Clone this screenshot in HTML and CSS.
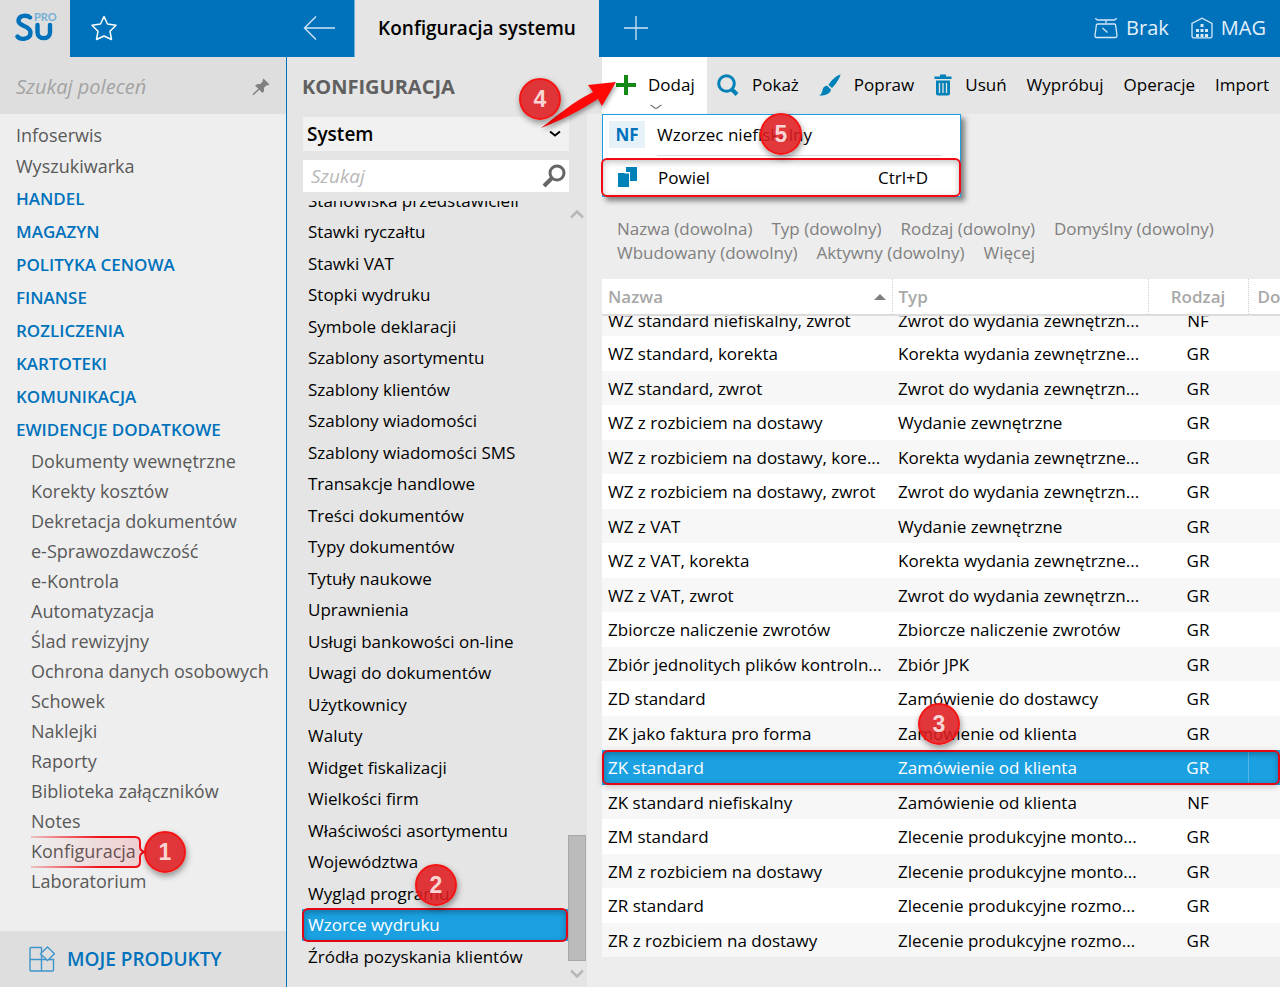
FILE: index.html
```html
<!DOCTYPE html>
<html lang="pl">
<head>
    <meta charset="UTF-8">
    <meta name="viewport" content="width=device-width, initial-scale=1.0">
    <title>Konfiguracja systemu</title>
    <link rel="stylesheet" href="styles.css">
</head>
<body>

    <header class="topbar">
        <a href="#" class="logo" aria-label="Su PRO">
            <svg width="44" height="30" viewBox="0 0 44 30" fill="none" stroke="#0072bc" stroke-width="4.4" stroke-linecap="round">
                <path d="M15 5.5C12.500 3 4 2.500 3.500 8.500C3 15 15.500 13 15.500 20.500C15.500 28 5 28 2.500 24.500"/>
                <path d="M22.500 13V20.500C22.500 28 35 28 35 20.500V13"/>
            </svg>
            <span class="logo-pro">PRO</span>
        </a>
        <div class="topbar-left">
            <button type="button" class="icon-button" aria-label="Ulubione">
                <svg width="28" height="28" viewBox="0 0 28 28" fill="none" stroke="#fff" stroke-width="1.5" stroke-linejoin="round">
                    <path d="M14 2.500L17.500 10L26 11.300L20 17.200L21.500 25.500L14 22L6.500 25.500L8 17.200L2 11.300L10.500 10Z"/>
                </svg>
            </button>
            <button type="button" class="icon-button" aria-label="Wstecz">
                <svg width="34" height="26" viewBox="0 0 34 26" fill="none" stroke="#cfe5f5" stroke-width="1.4">
                    <path d="M33 13H3M14 1.500L2.500 13L14 24.500"/>
                </svg>
            </button>
        </div>
        <div class="tab">Konfiguracja systemu</div>
        <div class="topbar-right">
            <button type="button" class="icon-button" aria-label="Nowa karta">
                <svg width="26" height="26" viewBox="0 0 26 26" fill="none" stroke="#cfe5f5" stroke-width="1.3">
                    <path d="M13 1V25M1 13H25"/>
                </svg>
            </button>
            <div class="status">
                <a href="#" class="status-item">
                    <svg width="24" height="22" viewBox="0 0 24 22" fill="none" stroke="#d5e8f6" stroke-width="1.3">
                        <path d="M1.500 1C2 3 3 3 4 3H20C21 3 22 3 22.500 1M12 3V6M3.500 7H20.500C21 7 21.500 7.500 21.600 8L23 18.500C23 20 22.500 20.500 21.500 20.500H2.500C1.500 20.500 1 20 1 18.500L2.400 8C2.500 7.500 3 7 3.500 7ZM8.500 11L13.500 15.500"/>
                    </svg>
                    Brak
                </a>
                <a href="#" class="status-item">
                    <svg width="22" height="22" viewBox="0 0 22 22" fill="none" stroke="#d5e8f6" stroke-width="1.3">
                        <path d="M1 18.500V6.500L11 1.200L21 6.500V18.500C21 20 20.500 20.800 19.500 20.800H2.500C1.500 20.800 1 20 1 18.500Z"/>
                        <path fill="#d5e8f6" stroke="none" d="M9.500 7h3v3h-3zM5 12h3v3H5zM9.500 12h3v3h-3zM14 12h3v3h-3zM5 17h3v3H5zM9.500 17h3v3h-3zM14 17h3v3h-3z"/>
                    </svg>
                    MAG
                </a>
            </div>
        </div>
    </header>

    <div class="layout">
        <aside class="sidebar">
            <div class="command-search">
                <input type="text" aria-label="Szukaj poleceń" placeholder="Szukaj poleceń">
                <svg width="18" height="18" viewBox="0 0 18 18" fill="#808080">
                    <path d="M11.500 0.500L17.500 6.500L15.500 7.500L14.500 7.200L11.800 10C12.500 12 12 13.500 10.500 15L7.300 11.800L2 16.800L0.500 17.300L1 15.800L6.300 10.700L3 7.500C4.500 6 6.500 5.500 8 6.200L10.800 3.500L10.500 2.500Z"/>
                </svg>
            </div>
            <nav class="menu">
                <a href="#" class="menu-link">Infoserwis</a>
                <a href="#" class="menu-link">Wyszukiwarka</a>
                <a href="#" class="menu-group">HANDEL</a>
                <a href="#" class="menu-group">MAGAZYN</a>
                <a href="#" class="menu-group">POLITYKA CENOWA</a>
                <a href="#" class="menu-group">FINANSE</a>
                <a href="#" class="menu-group">ROZLICZENIA</a>
                <a href="#" class="menu-group">KARTOTEKI</a>
                <a href="#" class="menu-group">KOMUNIKACJA</a>
                <a href="#" class="menu-group">EWIDENCJE DODATKOWE</a>
                <a href="#" class="menu-sub">Dokumenty wewnętrzne</a>
                <a href="#" class="menu-sub">Korekty kosztów</a>
                <a href="#" class="menu-sub">Dekretacja dokumentów</a>
                <a href="#" class="menu-sub">e-Sprawozdawczość</a>
                <a href="#" class="menu-sub">e-Kontrola</a>
                <a href="#" class="menu-sub">Automatyzacja</a>
                <a href="#" class="menu-sub">Ślad rewizyjny</a>
                <a href="#" class="menu-sub">Ochrona danych osobowych</a>
                <a href="#" class="menu-sub">Schowek</a>
                <a href="#" class="menu-sub">Naklejki</a>
                <a href="#" class="menu-sub">Raporty</a>
                <a href="#" class="menu-sub">Biblioteka załączników</a>
                <a href="#" class="menu-sub">Notes</a>
                <a href="#" class="menu-sub menu-marked">
                    Konfiguracja
                    <svg class="marker" width="116" height="34" viewBox="0 0 116 34" fill="none">
                        <defs>
                            <linearGradient id="markerLine" gradientUnits="userSpaceOnUse" x1="0" y1="0" x2="116" y2="0">
                                <stop offset="0" stop-color="#f01018" stop-opacity="0.2"/>
                                <stop offset="0.6" stop-color="#f01018"/>
                            </linearGradient>
                            <linearGradient id="markerFill" x1="0" y1="0" x2="1" y2="0">
                                <stop offset="0" stop-color="#f01018" stop-opacity="0"/>
                                <stop offset="1" stop-color="#f01018" stop-opacity="0.14"/>
                            </linearGradient>
                        </defs>
                        <path fill="url(#markerFill)" d="M0 2H104Q109 2 109 7V27Q109 32 104 32H0Z"/>
                        <path stroke="url(#markerLine)" stroke-width="2" d="M0 2H104Q109 2 109 7V12Q109 16 114 17Q109 18 109 22V27Q109 32 104 32H0"/>
                    </svg>
                    <span class="badge badge-1">1</span>
                </a>
                <a href="#" class="menu-sub">Laboratorium</a>
            </nav>
            <a href="#" class="products">
                <svg width="26" height="26" viewBox="0 0 26 26" fill="none" stroke="#3f95cb" stroke-width="1.4">
                    <path d="M12.500 13.500H1V2.500Q1 1.500 2 1.500H12.500V25H2Q1 25 1 24V13.500M12.500 13.500H24.500V24Q24.500 25 23.500 25H12.500"/>
                    <path fill="#dedede" d="M18.500 1L25.500 7.800L18.500 14.600L11.500 7.800Z"/>
                </svg>
                MOJE PRODUKTY
            </a>
        </aside>

        <section class="config">
            <h1>KONFIGURACJA</h1>
            <div class="select-wrap">
                <select aria-label="Obszar konfiguracji">
                    <option>System</option>
                </select>
                <svg width="12" height="8" viewBox="0 0 12 8" fill="none" stroke="#000" stroke-width="2">
                    <path d="M1 1.500L6 5.500L11 1.500"/>
                </svg>
            </div>
            <div class="search-wrap">
                <input type="text" aria-label="Szukaj" placeholder="Szukaj">
                <svg width="24" height="24" viewBox="0 0 24 24" fill="none" stroke="#666">
                    <circle cx="15" cy="9" r="7" stroke-width="3"/>
                    <path d="M10 14L2 22" stroke-width="4"/>
                </svg>
            </div>
            <div class="config-body">
                <ul class="config-list">
                    <li>Stanowiska przedstawicieli</li>
                    <li>Stawki ryczałtu</li>
                    <li>Stawki VAT</li>
                    <li>Stopki wydruku</li>
                    <li>Symbole deklaracji</li>
                    <li>Szablony asortymentu</li>
                    <li>Szablony klientów</li>
                    <li>Szablony wiadomości</li>
                    <li>Szablony wiadomości SMS</li>
                    <li>Transakcje handlowe</li>
                    <li>Treści dokumentów</li>
                    <li>Typy dokumentów</li>
                    <li>Tytuły naukowe</li>
                    <li>Uprawnienia</li>
                    <li>Usługi bankowości on-line</li>
                    <li>Uwagi do dokumentów</li>
                    <li>Użytkownicy</li>
                    <li>Waluty</li>
                    <li>Widget fiskalizacji</li>
                    <li>Wielkości firm</li>
                    <li>Właściwości asortymentu</li>
                    <li>Województwa</li>
                    <li>Wygląd programu</li>
                    <li class="selected">Wzorce wydruku<span class="badge badge-2">2</span></li>
                    <li>Źródła pozyskania klientów</li>
                </ul>
                <div class="scrollbar">
                    <svg width="14" height="10" viewBox="0 0 14 10" fill="none" stroke="#b8b8b8" stroke-width="2.500">
                        <path d="M1 8.500L7 2.500L13 8.500"/>
                    </svg>
                    <div class="scroll-thumb"></div>
                    <svg width="14" height="10" viewBox="0 0 14 10" fill="none" stroke="#b8b8b8" stroke-width="2.500">
                        <path d="M1 1.500L7 7.500L13 1.500"/>
                    </svg>
                </div>
            </div>
        </section>

        <main class="content">
            <div class="toolbar">
                <div class="add-wrap">
                    <button type="button" class="tool tool-add">
                        <svg width="22" height="20" viewBox="0 0 22 20" fill="#138a13"><path d="M9 0h4v8h8v4h-8v8H9v-8H1V8h8z"/></svg>
                        Dodaj
                        <svg class="add-chevron" width="12" height="6" viewBox="0 0 12 6" fill="none" stroke="#777" stroke-width="1.2"><path d="M0.500 1C3 2 4.500 4.500 6 4.500S9 2 11.500 1"/></svg>
                    </button>
                    <div class="add-menu">
                        <button type="button" class="add-item">
                            <span class="nf">NF</span>
                            Wzorzec niefiskalny
                        </button>
                        <button type="button" class="add-item add-item-marked">
                            <svg width="20" height="20" viewBox="0 0 20 20" fill="#0081b8"><path d="M8 0H19V14H12V5H8Z"/><path d="M0 6H6.500V6.500H11V20H0Z"/></svg>
                            Powiel
                            <kbd>Ctrl+D</kbd>
                        </button>
                    </div>
                    <span class="badge badge-5">5</span>
                    <svg class="arrow" width="80" height="58" viewBox="0 0 80 58" fill="#fe0808">
                        <path d="M3 53C20 40 35 27 55 17L50 10L78 7L64 31L60 24C43 35 22 46 3 53Z"/>
                    </svg>
                    <span class="badge badge-4">4</span>
                </div>
                <button type="button" class="tool">
                    <svg width="22" height="22" viewBox="0 0 22 22" fill="none" stroke="#0081b8"><circle cx="9.500" cy="9.500" r="7.800" stroke-width="3"/><path d="M14.500 15L20 20.500" stroke-width="4"/></svg>
                    Pokaż
                </button>
                <button type="button" class="tool">
                    <svg width="22" height="22" viewBox="0 0 22 22" fill="#0081b8"><path d="M21.500 0.500C18 1 12 6.500 9.500 11L13 14C17 10 21 4 21.500 0.500ZM8.500 12L12 15.500C11.500 20 5 22 0 21.500C3 20 3 17.500 4 14.500C5 12.500 7 11.500 8.500 12Z"/></svg>
                    Popraw
                </button>
                <button type="button" class="tool">
                    <svg width="18" height="22" viewBox="0 0 18 22"><path fill="#0081b8" d="M6 0.500H12V2.500H17.500V5H0.500V2.500H6ZM2 6.500H16V19.500Q16 21.500 14 21.500H4Q2 21.500 2 19.500Z"/><path stroke="#e5e5e5" stroke-width="1.3" d="M5.500 9V19M9 9V19M12.500 9V19"/></svg>
                    Usuń
                </button>
                <button type="button" class="tool">Wypróbuj</button>
                <button type="button" class="tool">Operacje</button>
                <button type="button" class="tool">Import</button>
            </div>

            <div class="filters">
                <a href="#">Nazwa (dowolna)</a>
                <a href="#">Typ (dowolny)</a>
                <a href="#">Rodzaj (dowolny)</a>
                <a href="#">Domyślny (dowolny)</a>
                <a href="#">Wbudowany (dowolny)</a>
                <a href="#">Aktywny (dowolny)</a>
                <a href="#">Więcej</a>
            </div>

            <table class="grid">
                <colgroup>
                    <col class="col-name">
                    <col class="col-type">
                    <col class="col-kind">
                    <col class="col-default">
                </colgroup>
                <thead>
                    <tr>
                        <th>Nazwa<span class="sort"></span></th>
                        <th>Typ</th>
                        <th>Rodzaj</th>
                        <th>Do</th>
                    </tr>
                </thead>
                <tbody>
                    <tr class="cut"><td><div>WZ standard niefiskalny, zwrot</div></td><td><div>Zwrot do wydania zewnętrzn...</div></td><td><div>NF</div></td><td></td></tr>
                    <tr><td>WZ standard, korekta</td><td>Korekta wydania zewnętrzne...</td><td>GR</td><td></td></tr>
                    <tr><td>WZ standard, zwrot</td><td>Zwrot do wydania zewnętrzn...</td><td>GR</td><td></td></tr>
                    <tr><td>WZ z rozbiciem na dostawy</td><td>Wydanie zewnętrzne</td><td>GR</td><td></td></tr>
                    <tr><td>WZ z rozbiciem na dostawy, kore...</td><td>Korekta wydania zewnętrzne...</td><td>GR</td><td></td></tr>
                    <tr><td>WZ z rozbiciem na dostawy, zwrot</td><td>Zwrot do wydania zewnętrzn...</td><td>GR</td><td></td></tr>
                    <tr><td>WZ z VAT</td><td>Wydanie zewnętrzne</td><td>GR</td><td></td></tr>
                    <tr><td>WZ z VAT, korekta</td><td>Korekta wydania zewnętrzne...</td><td>GR</td><td></td></tr>
                    <tr><td>WZ z VAT, zwrot</td><td>Zwrot do wydania zewnętrzn...</td><td>GR</td><td></td></tr>
                    <tr><td>Zbiorcze naliczenie zwrotów</td><td>Zbiorcze naliczenie zwrotów</td><td>GR</td><td></td></tr>
                    <tr><td>Zbiór jednolitych plików kontroln...</td><td>Zbiór JPK</td><td>GR</td><td></td></tr>
                    <tr><td>ZD standard</td><td>Zamówienie do dostawcy</td><td>GR</td><td></td></tr>
                    <tr><td>ZK jako faktura pro forma</td><td>Zamówienie od klienta</td><td>GR</td><td></td></tr>
                    <tr class="selected"><td>ZK standard</td><td>Zamówienie od klienta</td><td>GR</td><td><span class="badge badge-3">3</span></td></tr>
                    <tr><td>ZK standard niefiskalny</td><td>Zamówienie od klienta</td><td>NF</td><td></td></tr>
                    <tr><td>ZM standard</td><td>Zlecenie produkcyjne monto...</td><td>GR</td><td></td></tr>
                    <tr><td>ZM z rozbiciem na dostawy</td><td>Zlecenie produkcyjne monto...</td><td>GR</td><td></td></tr>
                    <tr><td>ZR standard</td><td>Zlecenie produkcyjne rozmo...</td><td>GR</td><td></td></tr>
                    <tr><td>ZR z rozbiciem na dostawy</td><td>Zlecenie produkcyjne rozmo...</td><td>GR</td><td></td></tr>
                </tbody>
            </table>
        </main>
    </div>

</body>
</html>
```
FILE: styles.css
```css
* {
    box-sizing: border-box;
}
body {
    margin: 0;
    height: 100vh;
    display: flex;
    flex-direction: column;
    overflow: hidden;
    background-color: #ededed;
    font-family: "Open Sans", "Noto Sans", sans-serif;
    font-size: 17px;
    color: #000;
}
a {
    color: inherit;
    text-decoration: none;
}
button, input, select {
    font: inherit;
    color: inherit;
    border: none;
    border-radius: 0;
    background: none;
    padding: 0;
    margin: 0;
    outline: none;
}
svg {
    flex: none;
}

/* top bar */
.topbar {
    flex: none;
    display: flex;
    height: 57px;
    background-color: #0072bc;
}
.logo {
    width: 70px;
    padding: 12px 0 0 15px;
    background-color: #dedede;
    position: relative;
}
.logo-pro {
    position: absolute;
    top: 10px;
    left: 34px;
    font-family: Lato, sans-serif;
    font-size: 11px;
    font-weight: bold;
    line-height: 14px;
    color: #74afd6;
}
.topbar-left {
    width: 285px;
    display: flex;
    align-items: center;
    justify-content: space-between;
    padding: 0 18px 2px 20px;
    border-right: 1px solid #74afd6;
}
.icon-button {
    display: flex;
    cursor: pointer;
}
.tab {
    width: 244px;
    display: flex;
    align-items: center;
    justify-content: center;
    padding-bottom: 2px;
    background-color: #e5e5e5;
    font-size: 19px;
    font-weight: 600;
    white-space: nowrap;
}
.topbar-right {
    flex: 1;
    display: flex;
    align-items: center;
    justify-content: space-between;
    padding: 0 14px 2px 24px;
}
.status {
    display: flex;
    gap: 22px;
    color: #e4f0f9;
    font-size: 20px;
}
.status-item {
    display: flex;
    align-items: center;
    gap: 8px;
}

.layout {
    flex: 1;
    min-height: 0;
    display: flex;
}

/* left menu */
.sidebar {
    width: 287px;
    flex: none;
    display: flex;
    flex-direction: column;
    border-right: 1px solid #0072bc;
    background-color: #eee;
    color: #595959;
    font-size: 18px;
}
.command-search {
    display: flex;
    align-items: center;
    height: 57px;
    padding: 2px 16px 0;
    background-color: #dedede;
}
.command-search input {
    flex: 1;
    min-width: 0;
    font-size: 20px;
    font-style: italic;
}
.command-search input::placeholder {
    color: #a3a3a3;
}
.menu {
    flex: 1;
    display: flex;
    flex-direction: column;
    padding-top: 6px;
}
.menu a {
    padding-left: 16px;
    line-height: 31px;
    white-space: nowrap;
}
.menu .menu-group {
    line-height: 33px;
    font-size: 17px;
    font-weight: 600;
    color: #0072bc;
}
.menu .menu-sub {
    padding-left: 31px;
    line-height: 30px;
}
.menu-marked {
    position: relative;
}
.marker {
    position: absolute;
    left: 31px;
    top: -1px;
}
.products {
    display: flex;
    align-items: center;
    gap: 12px;
    height: 56px;
    padding-left: 29px;
    background-color: #dedede;
    font-size: 19px;
    font-weight: 600;
    color: #0072bc;
}

/* configuration list */
.config {
    width: 300px;
    flex: none;
    display: flex;
    flex-direction: column;
    background-color: #e5e5e5;
    padding-left: 15px;
}
.config h1 {
    margin: 0;
    font-size: 20px;
    line-height: 60px;
    font-weight: bold;
    color: #606060;
}
.select-wrap, .search-wrap {
    display: flex;
    align-items: center;
    margin: 0 18px 0 1px;
}
.select-wrap {
    height: 34px;
    padding-right: 8px;
    background-color: #f1f1f1;
}
.select-wrap select {
    flex: 1;
    appearance: none;
    padding-left: 4px;
    font-size: 19px;
    font-weight: 600;
}
.search-wrap {
    height: 32px;
    margin-top: 9px;
    padding: 0 3px 0 8px;
    background-color: #fff;
}
.search-wrap input {
    flex: 1;
    min-width: 0;
    font-size: 19px;
    font-style: italic;
}
.search-wrap input::placeholder {
    color: #b8b8b8;
}
.config-body {
    flex: 1;
    min-height: 0;
    display: flex;
    margin-top: 9px;
    padding-right: 1px;
    padding-bottom: 8px;
}
/* scrolled to the end, the first row is cut */
.config-list {
    flex: 1;
    display: flex;
    flex-direction: column;
    justify-content: flex-end;
    margin: 0;
    padding: 0 0 7px;
    overflow: hidden;
    list-style: none;
}
.config-list li {
    flex: none;
    height: 31px;
    padding-left: 6px;
    line-height: 31px;
    white-space: nowrap;
    position: relative;
}
.config-list li:nth-child(even) {
    height: 32px;
}
.config-list .selected::before {
    content: "";
    position: absolute;
    inset: -1px 0;
    border: 2px solid #e30613;
    border-radius: 6px;
    box-shadow: inset 0 2px 6px rgba(0, 0, 0, 0.3);
}
.selected {
    background-color: #1ba1e2;
    color: #fff;
}
.scrollbar {
    width: 18px;
    display: flex;
    flex-direction: column;
    align-items: center;
    padding-top: 8px;
}
.scroll-thumb {
    width: 18px;
    height: 126px;
    margin: auto 0 8px;
    border: 1px solid #a8a8a8;
    background-color: #bbb;
}

/* toolbar */
.content {
    flex: 1;
    min-width: 0;
}
.toolbar {
    display: flex;
    height: 57px;
    padding-left: 15px;
    background-color: #e5e5e5;
}
.tool {
    display: flex;
    align-items: center;
    gap: 13px;
    height: 57px;
    padding: 0 10px 2px;
    white-space: nowrap;
    cursor: pointer;
}
.add-wrap {
    position: relative;
    z-index: 1;
}
.tool-add {
    width: 105px;
    gap: 11px;
    padding-left: 13px;
    background-color: #fff;
}
.add-chevron {
    position: absolute;
    left: 48px;
    bottom: 4px;
}
.add-menu {
    position: absolute;
    top: 57px;
    left: 0;
    width: 359px;
    border: 1px solid #1ba1e2;
    background-color: #fff;
    box-shadow: 4px 4px 5px rgba(0, 0, 0, 0.45);
}
.add-item {
    display: flex;
    align-items: center;
    width: 100%;
    height: 43px;
    padding: 0 32px 4px 6px;
    text-align: left;
    cursor: pointer;
    position: relative;
}
.add-item:first-child::after {
    content: "";
    position: absolute;
    left: 54px;
    right: 18px;
    bottom: 2px;
    height: 1px;
    background-color: #dcdcdc;
}
.add-item-marked {
    height: 38px;
    padding: 0 32px 0 15px;
    gap: 20px;
}
.add-item-marked::before {
    content: "";
    position: absolute;
    inset: 0 -1px -1px -2px;
    border: 2px solid #f00a14;
    border-radius: 6px;
    box-shadow: inset 0 2px 6px rgba(0, 0, 0, 0.25);
}
.add-item kbd {
    margin-left: auto;
    font: inherit;
}
.nf {
    width: 36px;
    margin-right: 12px;
    background-color: #e6f1f8;
    color: #0072bc;
    font-weight: bold;
    line-height: 27px;
    text-align: center;
}

/* filters */
.filters {
    display: flex;
    flex-wrap: wrap;
    column-gap: 19px;
    padding: 103px 30px 14px;
    color: #808080;
    line-height: 24px;
}

/* grid */
.grid {
    width: calc(100% - 15px);
    margin-left: 15px;
    border-collapse: collapse;
    table-layout: fixed;
    background-color: #fff;
}
.col-type {
    width: 256px;
}
.col-kind {
    width: 100px;
}
.col-default {
    width: 32px;
}
.grid th, .grid td {
    padding: 0 0 0 6px;
    text-align: left;
    white-space: nowrap;
    overflow: hidden;
}
.grid th {
    height: 36px;
    border-bottom: 2px solid #dcdcdc;
    font-weight: 600;
    color: #a8a8a8;
}
.grid th + th {
    border-left: 1px dotted #d0d0d0;
}
.grid th:last-child {
    padding-left: 9px;
}
.grid th:nth-child(3), .grid td:nth-child(3) {
    padding: 0 2px;
    text-align: center;
}
.sort {
    float: right;
    margin: 9px 6px 0 0;
    border: 6px solid transparent;
    border-top: none;
    border-bottom-color: #808080;
}
.grid tbody tr {
    height: 34px;
}
.grid tbody tr:nth-child(even) {
    height: 35px;
}
.grid tbody tr:nth-child(odd) {
    background-color: #f7f7f7;
}
.grid tbody .cut {
    height: 20px;
}
.cut div {
    display: flex;
    flex-direction: column;
    justify-content: flex-end;
    height: 20px;
    padding-bottom: 3px;
    line-height: 24px;
    overflow: hidden;
}
.grid tbody .selected {
    background-color: #1ba1e2;
    position: relative;
}
.grid .selected td:last-child {
    overflow: visible;
    border-left: 1px solid #55b5e6;
}
.grid .selected td:first-child::before {
    content: "";
    position: absolute;
    inset: 0;
    border: 2px solid #e30613;
    border-radius: 6px;
    box-shadow: inset 0 2px 6px rgba(0, 0, 0, 0.3), 0 2px 6px rgba(0, 0, 0, 0.2);
}

/* numbered badges */
.badge {
    position: absolute;
    width: 42px;
    height: 42px;
    border: 2px solid #f51414;
    border-radius: 50%;
    background-color: rgba(222, 28, 32, 0.88);
    box-shadow: 1px 3px 6px rgba(0, 0, 0, 0.4);
    color: #f9d4d4;
    font-family: "Liberation Sans", sans-serif;
    font-size: 23px;
    font-weight: bold;
    line-height: 38px;
    text-align: center;
}
.badge-1 {
    left: 144px;
    top: -5px;
}
.badge-2 {
    left: 113px;
    top: -45px;
}
.badge-3 {
    left: 316px;
    top: -47px;
}
.badge-4 {
    left: -83px;
    top: 21px;
}
.badge-5 {
    left: 158px;
    top: 56px;
}
.arrow {
    position: absolute;
    left: -64px;
    top: 18px;
    filter: drop-shadow(1px 3px 2px rgba(0, 0, 0, 0.35));
}
```
